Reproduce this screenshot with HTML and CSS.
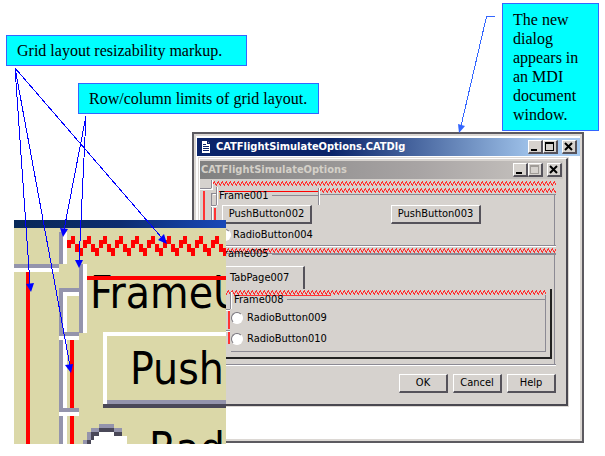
FILE: index.html
```html
<!DOCTYPE html>
<html lang="en">
<head>
<meta charset="utf-8">
<title>CATFlightSimulateOptions dialog</title>
<link rel="stylesheet" href="styles.css">
</head>
<body>
<main class="diagram">
  <svg class="defs" width="0" height="0" aria-hidden="true">
    <defs>
      <pattern id="zig" width="4" height="5" patternUnits="userSpaceOnUse">
        <path fill="#f33" d="M0 1h1v2H0zM1 0h1v2H1zM2 2h1v2H2zM3 3h1v2H3z"/>
      </pattern>
    </defs>
  </svg>

  <section class="window document">
    <header class="titlebar">
      <svg class="doc-icon" width="10" height="12" viewBox="0 0 10 12" aria-hidden="true">
        <path fill="#fff" d="M1 0h5l3 3v9H1z"/>
        <path fill="#0a246a" d="M6 0v3h3V2H7V0zM2 3h3v1H2zM2 5h6v1H2zM2 7h6v1H2zM2 9h6v1H2z"/>
      </svg>
      <h1 class="title">CATFlightSimulateOptions.CATDlg</h1>
      <div class="controls">
        <button type="button" aria-label="Minimize"><svg width="11" height="10"><path fill="#000" d="M2 7h6v2H2z"/></svg></button>
        <button type="button" aria-label="Maximize"><svg width="11" height="10"><path fill="#000" fill-rule="evenodd" d="M1 0h9v9H1zM2 2v6h7V2z"/></svg></button>
        <button type="button" class="close" aria-label="Close"><svg width="11" height="10"><path stroke="#000" stroke-width="2" d="M2 1l7 7M9 1L2 8"/></svg></button>
      </div>
    </header>

    <div class="dialog">
      <header class="titlebar inactive">
        <h2 class="title">CATFlightSimulateOptions</h2>
        <div class="controls">
          <button type="button" aria-label="Minimize"><svg width="11" height="10"><path fill="#000" d="M2 7h6v2H2z"/></svg></button>
          <button type="button" aria-label="Maximize" disabled><svg width="11" height="10"><path fill="#a09c98" fill-rule="evenodd" d="M1 0h9v9H1zM2 2v6h7V2z"/></svg></button>
          <button type="button" class="close" aria-label="Close"><svg width="11" height="10"><path stroke="#000" stroke-width="2" d="M2 1l7 7M9 1L2 8"/></svg></button>
        </div>
      </header>
      <div class="dialog-body">
        <svg class="zigzag" aria-hidden="true"><rect width="100%" height="5" fill="url(#zig)"/></svg>

        <div class="frame" role="group" aria-labelledby="f1">
          <div class="frame-head">
            <div class="legend limited"><span id="f1">Frame001</span></div>
            <svg class="zigzag" aria-hidden="true"><rect width="100%" height="5" fill="url(#zig)"/></svg>
          </div>
          <div class="push-row">
            <button type="button" class="push">PushButton002</button>
            <button type="button" class="push">PushButton003</button>
          </div>
          <label class="radio"><input type="radio" name="top">RadioButton004</label>
        </div>

        <div class="frame tabs" role="group" aria-labelledby="f5">
          <div class="frame-head over">
            <svg class="zigzag" aria-hidden="true"><rect width="100%" height="5" fill="url(#zig)"/></svg>
            <div class="legend"><span id="f5">Frame005</span></div>
          </div>
          <button type="button" class="tab">TabPage007</button>
          <div class="pane">
            <svg class="zigzag" aria-hidden="true"><rect width="100%" height="5" fill="url(#zig)"/></svg>
            <div class="options" role="group" aria-labelledby="f8">
              <div class="legend limited"><span id="f8">Frame008</span></div>
              <label class="radio"><input type="radio" name="inner">RadioButton009</label>
              <label class="radio"><input type="radio" name="inner">RadioButton010</label>
            </div>
          </div>
        </div>

        <div class="actions">
          <button type="button" class="push">OK</button>
          <button type="button" class="push">Cancel</button>
          <button type="button" class="push">Help</button>
        </div>
      </div>
      <svg class="limits" width="122" height="186" viewBox="199 158 122 186" aria-hidden="true">
        <path fill="#fff" d="M200 189h12v1h-12zM212 180h1v10h-1zM213 194h4v1h-4zM217 187h1v18h-1zM211 206h6v1h-6zM212 207h1v37h-1zM319 188h1v17h-1z"/>
        <path fill="#8c8a94" d="M200 188h11v1h-11zM211 180h1v8h-1zM211 193h5v1h-5zM211 193h1v12h-1zM216 187h1v18h-1zM211 205h5v1h-5zM211 207h1v37h-1zM318 188h1v17h-1z"/>
        <path fill="#f33" d="M203 191h2v60h-2zM214 208h2v40h-2zM228 311h2v18h-2zM228 332h2v12h-2z"/>
        <path fill="#8c8a94" d="M230 292h1v17h-1zM226 309h4v1h-4zM226 330h4v1h-4z"/>
        <path fill="#fff" d="M231 292h1v17h-1zM226 310h4v1h-4zM226 331h4v1h-4z"/>
      </svg>
    </div>
  </section>

  <svg class="magnifier" width="212" height="224" viewBox="14 220 212 224" role="img" aria-label="Enlarged corner of the dialog">
    <defs>
      <linearGradient id="band"><stop offset="0" stop-color="#082858"/><stop offset=".5" stop-color="#0c2c70"/><stop offset="1" stop-color="#1848b8"/></linearGradient>
      <pattern id="bigzig" x="67" y="236" width="16" height="20" patternUnits="userSpaceOnUse">
        <path fill="#f00" d="M0 4h4v8H0zM4 0h4v8H4zM8 8h4v8H8zM12 12h4v8h-4z"/>
      </pattern>
    </defs>
    <path fill="#dbd8a8" d="M14 220h212v224H14z"/>
    <path fill="url(#band)" d="M14 220h212v8H14z"/>
    <path fill="url(#bigzig)" d="M67 236h159v20H67z"/>
    <text class="enlarged" x="90" y="308">FrameU</text>
    <path fill="#dbd8a8" d="M88 268h138v7H88z"/>
    <text class="enlarged" x="130" y="384">Push</text>
    <text class="enlarged" x="149" y="464">Rad</text>
    <path fill="#fff" d="M63 232h4v32h-4zM14 268h45v4H14zM83 264h4v69h-4zM63 292h16v4H63zM63 292h4v40h-4zM59 336h20v4H59zM63 340h4v68h-4zM59 412h20v4H59zM63 416h4v28h-4zM103 332h123v4H103zM103 332h4v72h-4z"/>
    <path fill="#9494ac" d="M59 232h4v32h-4zM14 264h45v4H14zM79 264h4v69h-4zM59 288h20v4H59zM59 288h4v44h-4zM59 332h20v4H59zM59 340h4v68h-4zM59 408h20v4H59zM59 416h4v28h-4zM107 400h119v4H107z"/>
    <path fill="#4a4858" d="M103 404h123v4H103z"/>
    <path fill="#f00" d="M26 272h4v172h-4zM87 276h139v4H87zM70 340h4v68h-4zM70 416h4v28h-4z"/>
    <path fill="#fff" d="M99 432h15v4h8v4h4v4H91v-8h8z"/>
    <path fill="#9494ac" d="M99 424h15v4H99zM91 428h8v4h-8zM114 428h8v4h-8zM87 432h4v8h-4zM83 440h4v4h-4z"/>
    <path fill="#4a4858" d="M99 428h15v4H99zM91 432h8v4h-8zM114 432h8v4h-8zM91 436h3v4h-3zM87 440h4v4h-4z"/>
    <path fill="#fff" d="M122 436h5v8h-5z"/>
  </svg>

  <svg class="connectors" width="605" height="456" viewBox="0 0 605 456" aria-hidden="true">
    <g fill="none" stroke="#00f" shape-rendering="crispEdges">
      <path d="M15 68L30 284M15 68L70 366M15 68L162 238M86 116L64 230M86 116L79 262"/>
      <path stroke="#36f" d="M495 16.500H486.500L461 126"/>
    </g>
    <path fill="#00f" d="M26 284l8-1-3 9zM65 365l8-1-2 9zM158 240l6-6 3 10zM60 228l8 1-5 8zM75 260l8 0-4 8z"/>
    <path fill="#36f" d="M458 124l7 2-6 7z"/>
  </svg>

  <p class="callout resize">Grid layout resizability markup.</p>
  <p class="callout rows">Row/column limits of grid layout.</p>
  <p class="callout mdi">The new dialog appears in an MDI document window.</p>
</main>
</body>
</html>
```
FILE: styles.css
```css
* { box-sizing: border-box; }

body {
  margin: 0;
  background: #fff;
  color: #000;
  font: 11px/12px "DejaVu Sans Condensed", "DejaVu Sans", sans-serif;
}

svg { display: block; }
.defs { position: absolute; }

.diagram {
  position: relative;
  min-height: 100vh;
  overflow: hidden;
}

/* Callouts */
.callout {
  position: absolute;
  margin: 0;
  padding: 5px 10px;
  width: 241px;
  border: 1px solid #36f;
  background: #0ff;
  font: 16px/19px "Liberation Serif", serif;
}
.resize { left: 6px; top: 35px; }
.rows { left: 78px; top: 83px; }
.mdi { left: 502px; top: 3px; width: 97px; padding: 6px 10px; }

.connectors, .magnifier { position: absolute; }
.connectors { left: 0; top: 0; }
.magnifier { left: 14px; top: 220px; }
.enlarged { font-size: 44px; }

/* Windows */
.window {
  position: absolute;
  left: 192px;
  top: 132px;
  width: 392px;
  padding: 4px 2px 2px 3px;
  border: 2px solid #5c5a60;
}
.document {
  background: #fff;
  box-shadow: inset 0 0 0 2px #dcd8d4;
}
.document::after {
  content: "";
  display: block;
  height: 33px;
}

.titlebar {
  display: flex;
  align-items: center;
  height: 18px;
  padding: 0 3px 0 4px;
  background: linear-gradient(90deg, #0a246a 35%, #a6caf0 90%);
  color: #fff;
}
.inactive {
  padding: 0 1px;
  background: linear-gradient(90deg, #808080, #a8a4a4 60%, #ccc8c4);
  color: #d4d0c8;
}
.doc-icon { margin-right: 5px; }
.title {
  flex: 1;
  margin: 0;
  font-size: 11px;
  line-height: 18px;
  font-weight: bold;
}
.controls { display: flex; }

button {
  margin: 0;
  padding: 0;
  border: solid;
  border-width: 1px 2px 2px 1px;
  border-color: #fff #55525a #55525a #fff;
  background: #d6d2ce;
  color: #000;
  font: inherit;
}
.controls button {
  width: 15px;
  height: 14px;
}
.controls .close { margin-left: 4px; }

.dialog {
  position: relative;
  margin: 2px 12px 0 2px;
  padding-top: 2px;
  border: solid;
  border-width: 1px 2px 2px 1px;
  border-color: #fff #4a4850 #4a4850 #fff;
  background: #d6d2ce;
  box-shadow: 0 0 0 1px #dcd8d4;
}
.dialog .titlebar { margin-right: 3px; }

.dialog-body { padding: 2px 10px 11px 13px; }
.zigzag {
  width: 100%;
  height: 5px;
}

/* Group frames */
.frame {
  position: relative;
  height: 58px;
  margin-top: 2px;
  padding-left: 6px;
  border-bottom: 1px solid #8c8a94;
  box-shadow: 0 1px #fff;
}
.frame::after {
  content: "";
  position: absolute;
  inset: 6px 1px 0 auto;
  border-right: 1px solid #8c8a94;
}
.frame-head {
  display: flex;
  height: 17px;
}
.frame-head .zigzag {
  flex: 1;
  height: 7px;
  border-bottom: 1px solid #8c8a94;
}
.legend {
  display: flex;
  height: 11px;
  line-height: 10px;
}
.legend::after {
  content: "";
  flex: 1;
  height: 1px;
  margin: 4px 0 0 3px;
  background: #8c8a94;
}
.frame-head .limited {
  width: 99px;
  margin: 3px 2px 0 0;
  border-top: 1px solid #f00;
  line-height: 8px;
}
.frame-head .limited::after { margin-top: 3px; }

.push-row {
  display: flex;
  gap: 79px;
  padding-left: 3px;
}
.push {
  width: 90px;
  height: 19px;
}

.radio {
  display: flex;
  align-items: center;
  height: 21px;
}
.radio input {
  appearance: none;
  width: 12px;
  height: 12px;
  margin: 0 4px 0 0;
  border: 1px solid;
  border-color: #77747c #fff #fff #77747c;
  border-radius: 50%;
  background: #fff;
}
.frame > .radio input { margin: 0 2px 0 0; }

.tabs {
  height: 117px;
  margin-top: 2px;
}
.over { flex-direction: column; height: 18px; }
.over .zigzag { flex: none; height: 6px; }
.over .legend { margin-top: -5px; }
.over .legend::after { margin-top: 5px; }
.tab {
  display: block;
  width: 83px;
  height: 23px;
  margin-left: 3px;
  padding-left: 7px;
  border-bottom: 0;
  text-align: left;
}
.pane {
  height: 70px;
  margin-right: 4px;
  border: solid #222;
  border-width: 0 2px 2px 0;
  padding: 1px 4px 0 0;
}
.options {
  height: 57px;
  margin-left: 12px;
  border: solid #8c8a94;
  border-width: 0 1px 1px 0;
}
.options .legend {
  height: 12px;
  margin-left: 3px;
  background: linear-gradient(90deg, #f33 97px, transparent 97px) 0 0 / 100% 1px no-repeat;
}
.options .radio { height: 21px; }

.actions {
  display: flex;
  justify-content: flex-end;
  gap: 5px;
  margin-top: 9px;
}
.actions .push { width: 49px; }

.limits {
  position: absolute;
  left: -1px;
  top: -1px;
}
```
